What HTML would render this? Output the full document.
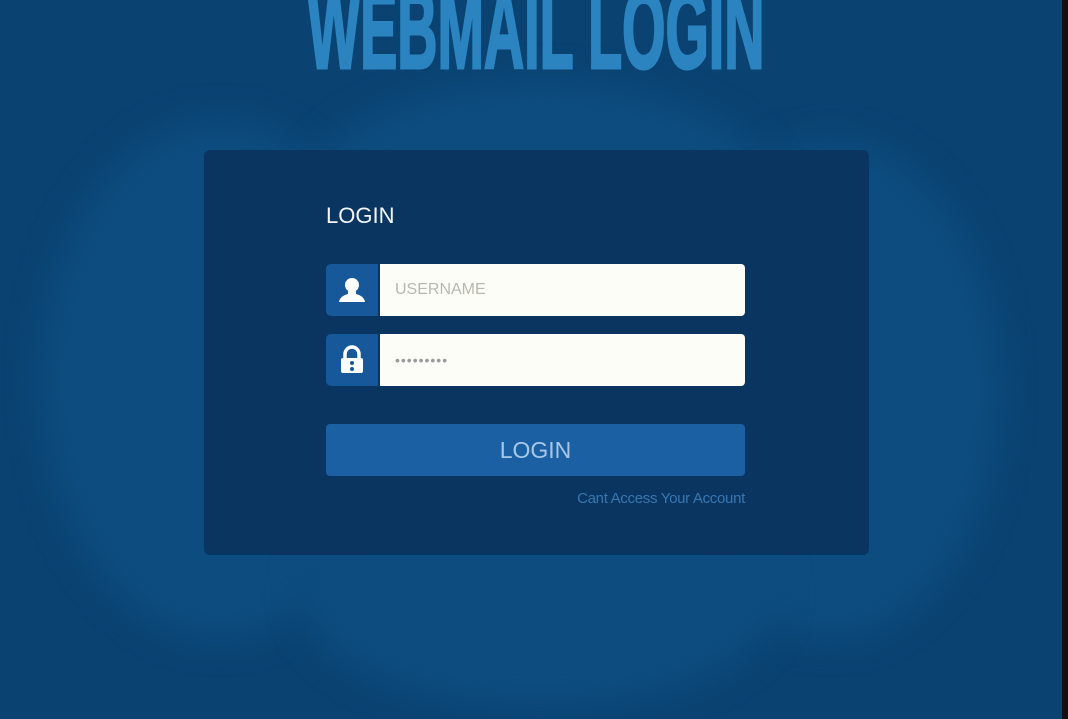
<!DOCTYPE html>
<html><head><style>
html,body{margin:0;padding:0;overflow:hidden;width:1068px;height:719px}
body{position:relative;background:#0a4372;font-family:"Liberation Sans",sans-serif}
.bg{position:absolute;left:0;top:0;width:1068px;height:719px;overflow:hidden}
.blob{position:absolute;border-radius:50%;background:#0d4c7f;filter:blur(16px)}
.title{position:absolute;left:308px;top:-22px;width:457px;height:100px;overflow:visible}
.card{position:absolute;left:204px;top:150px;width:665px;height:405px;background:#0b3561;border-radius:6px}
.h{position:absolute;left:326px;top:203px;color:#f2f4f6;font-size:22px}
.ib{position:absolute;left:326px;width:52px;height:52px;background:#17589a;border-radius:5px 0 0 5px}
.in{position:absolute;left:380px;width:365px;height:52px;background:#fdfdf7;border-radius:0 4px 4px 0;color:#b8b8b0;font-size:16px;line-height:52px;text-indent:15px}
.btn{position:absolute;left:326px;top:424px;width:419px;height:52px;background:#1b60a3;border-radius:4px;color:#a8c8e8;font-size:23px;text-align:center;line-height:52px}
.lnk{position:absolute;right:323px;top:490px;color:#3777b1;font-size:15px;letter-spacing:-0.3px}
.rb{position:absolute;right:0;top:0;width:6px;height:719px;background:#111}
</style></head><body>
<div class="bg">
<div class="blob" style="left:40px;top:120px;width:360px;height:520px;"></div>
<div class="blob" style="left:660px;top:140px;width:340px;height:500px;"></div>
<div class="blob" style="left:300px;top:80px;width:480px;height:250px;"></div>
<div class="blob" style="left:300px;top:480px;width:480px;height:230px;"></div>
</div>
<svg class="title" viewBox="0 0 457 100"><text x="228" y="90" text-anchor="middle" textLength="457" lengthAdjust="spacingAndGlyphs" font-family="Liberation Sans" font-weight="bold" font-size="112" fill="#2b84c0" stroke="#2b84c0" stroke-width="3">WEBMAIL LOGIN</text></svg>
<div class="card"></div>
<div class="h">LOGIN</div>
<div class="ib" style="top:264px"><svg width="52" height="52" viewBox="0 0 52 52"><circle cx="26" cy="21" r="7" fill="#fff"/><path d="M22 26 L22 30 Q14 32 13 38 L39 38 Q38 32 30 30 L30 26Z" fill="#fff"/></svg></div>
<div class="in" style="top:264px">USERNAME</div>
<div class="ib" style="top:334px"><svg width="52" height="52" viewBox="0 0 52 52"><path d="M19 25 V20 a7 7 0 0 1 14 0 V25" stroke="#fff" stroke-width="3.5" fill="none"/><rect x="15" y="24" width="22" height="15" rx="2" fill="#fff"/><circle cx="26" cy="29" r="2" fill="#17589a"/><circle cx="26" cy="35" r="2" fill="#17589a"/></svg></div>
<div class="in" style="top:334px;letter-spacing:1px;font-size:14px;color:#999">•••••••••</div>
<div class="btn">LOGIN</div>
<div class="lnk">Cant Access Your Account</div>
<div class="rb"></div>
</body></html>
